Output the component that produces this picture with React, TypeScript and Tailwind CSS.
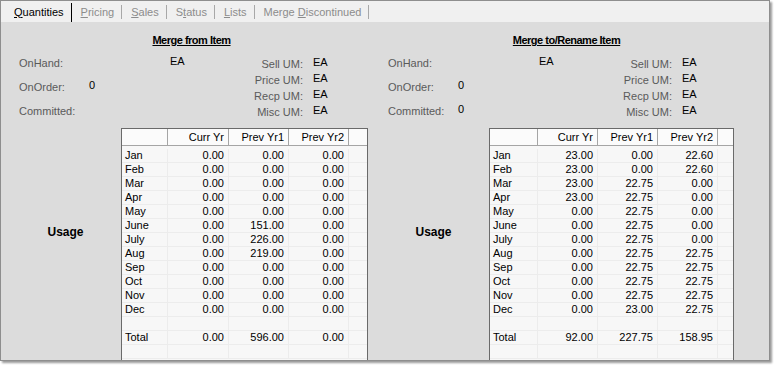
const months = ['Jan', 'Feb', 'Mar', 'Apr', 'May', 'June', 'July', 'Aug', 'Sep', 'Oct', 'Nov', 'Dec'];

type Side = {
  title: string;
  titlePad: string;
  panelPad: string;
  committed: string;
  widths: string[];
  curr: string[];
  prev1: string[];
  prev2: string[];
  totals: string[];
};

const z = (n: number) => Array(n).fill('0.00');

const fromItem: Side = {
  title: 'Merge from Item',
  titlePad: 'pl-[13px]',
  panelPad: 'pl-[18px]',
  committed: '',
  widths: ['w-[46px]', 'w-[61px]', 'w-[60px]', 'w-[60px]', 'w-[18px]'],
  curr: z(12),
  prev1: ['0.00', '0.00', '0.00', '0.00', '0.00', '151.00', '226.00', '219.00', '0.00', '0.00', '0.00', '0.00'],
  prev2: z(12),
  totals: ['0.00', '596.00', '0.00'],
};

const toItem: Side = {
  title: 'Merge to/Rename Item',
  titlePad: 'pr-[5px]',
  panelPad: 'pl-[19px]',
  committed: '0',
  widths: ['w-[48px]', 'w-[60px]', 'w-[60px]', 'w-[60px]', 'w-[15px]'],
  curr: ['23.00', '23.00', '23.00', '23.00', ...z(8)],
  prev1: ['0.00', '0.00', ...Array(9).fill('22.75'), '23.00'],
  prev2: ['22.60', '22.60', ...z(5), ...Array(5).fill('22.75')],
  totals: ['92.00', '227.75', '158.95'],
};

const tabs = [
  { pre: '', key: 'Q', post: 'uantities', active: true },
  { pre: '', key: 'P', post: 'ricing' },
  { pre: '', key: 'S', post: 'ales' },
  { pre: 'S', key: 't', post: 'atus' },
  { pre: '', key: 'L', post: 'ists' },
  { pre: 'Merge ', key: 'D', post: 'iscontinued' },
];

function Row({ widths, cells, label }: { widths: string[]; cells: string[]; label: string }) {
  return (
    <div className="flex h-[14px]">
      <div className={`${widths[0]} h-full border-r border-b border-[#ececec] pl-[3px] leading-[13px]`}>{label}</div>
      {cells.map((c, i) => (
        <div key={i} className={`${widths[i + 1]} h-full border-r border-b border-[#ececec] pr-[4px] text-right leading-[13px]`}>
          {c}
        </div>
      ))}
      <div className={`${widths[4]} h-full border-b border-[#ececec]`} />
    </div>
  );
}

function UsageTable({ s }: { s: Side }) {
  const w = s.widths;
  return (
    <div className="flex flex-col h-[240px] border-l border-r border-t border-[#6a6a6a] bg-[#f7f7f7] text-black">
      <div className="flex h-[17px] border-b border-[#a5a5a5] bg-[#fbfbfb]">
        <div className={`${w[0]} border-r border-[#a5a5a5]`} />
        {['Curr Yr', 'Prev Yr1', 'Prev Yr2'].map((h, i) => (
          <div key={h} className={`${w[i + 1]} border-r border-[#a5a5a5] pr-[4px] text-right leading-[16px]`}>
            {h}
          </div>
        ))}
        <div className={w[4]} />
      </div>
      <div className="pt-[3px] flex flex-col">
        {months.map((m, i) => (
          <Row key={m} widths={w} label={m} cells={[s.curr[i], s.prev1[i], s.prev2[i]]} />
        ))}
        <Row widths={w} label="" cells={['', '', '']} />
        <Row widths={w} label="Total" cells={s.totals} />
        <Row widths={w} label="" cells={['', '', '']} />
      </div>
    </div>
  );
}

function Panel({ s, className }: { s: Side; className: string }) {
  return (
    <div className={`${className} flex flex-col`}>
      <div className={`mt-[10px] text-center ${s.titlePad}`}>
        <span className="font-bold underline tracking-[-0.5px] leading-[13px] text-black">{s.title}</span>
      </div>

      <div className={`mt-[3px] flex ${s.panelPad} leading-[13px]`}>
        <div className="w-[70px] flex flex-col text-[#5a5a5a]">
          <div className="h-[24px] flex items-center">OnHand:</div>
          <div className="h-[24px] flex items-center">OnOrder:</div>
          <div className="h-[24px] flex items-center">Committed:</div>
        </div>
        <div className="w-[81px] flex flex-col text-black -mt-[2px]">
          <div className="h-[24px]" />
          <div className="h-[24px] flex items-center">0</div>
          <div className="h-[24px] flex items-center">{s.committed}</div>
        </div>
        <div className="w-[50px] flex flex-col text-black">
          <div className="h-[24px] flex items-center -mt-[2px]">EA</div>
        </div>
        <div className="w-[83px] flex flex-col items-end mt-[5px] text-[#5a5a5a]">
          {['Sell UM:', 'Price UM:', 'Recp UM:', 'Misc UM:'].map(t => (
            <div key={t} className="h-[16px] flex items-center">{t}</div>
          ))}
        </div>
        <div className="pl-[10px] flex flex-col mt-[3px] text-black">
          {[0, 1, 2, 3].map(i => (
            <div key={i} className="h-[16px] flex items-center">EA</div>
          ))}
        </div>
      </div>

      <div className="mt-[4px] flex">
        <div className="w-[120px] pl-[9px] pt-[96px] text-center">
          <span className="font-bold text-[12px] leading-[14px] text-black">Usage</span>
        </div>
        <UsageTable s={s} />
      </div>
    </div>
  );
}

export default function App() {
  return (
    <div className="w-[777px] h-[368px] bg-white font-['Liberation_Sans',Arial,sans-serif] text-[11px]">
      <div className="w-[770px] h-[361px] border border-[#8e8e8e] shadow-[2px_2px_2px_rgba(0,0,0,0.4)] bg-[#dcdcdc] overflow-hidden flex flex-col">
        <div className="h-[21px] shrink-0 bg-[#f0f0f0] flex items-center pl-[4px]">
          {tabs.map((t, i) => (
            <div key={i} className="flex items-center h-full">
              <span className={`pl-[9px] pr-[7px] text-[11px] leading-[14px] ${t.active ? 'text-black' : 'text-[#8c8c8c]'}`}>
                {t.pre}
                <span className="underline">{t.key}</span>
                {t.post}
              </span>
              {t.active ? (
                <span className="w-px self-stretch mt-[2px] bg-black" />
              ) : (
                <span className="w-px h-[14px] bg-[#a8a8a8]" />
              )}
            </div>
          ))}
        </div>
        <div className="flex flex-1">
          <Panel s={fromItem} className="w-[368px]" />
          <Panel s={toItem} className="flex-1" />
        </div>
      </div>
    </div>
  );
}
